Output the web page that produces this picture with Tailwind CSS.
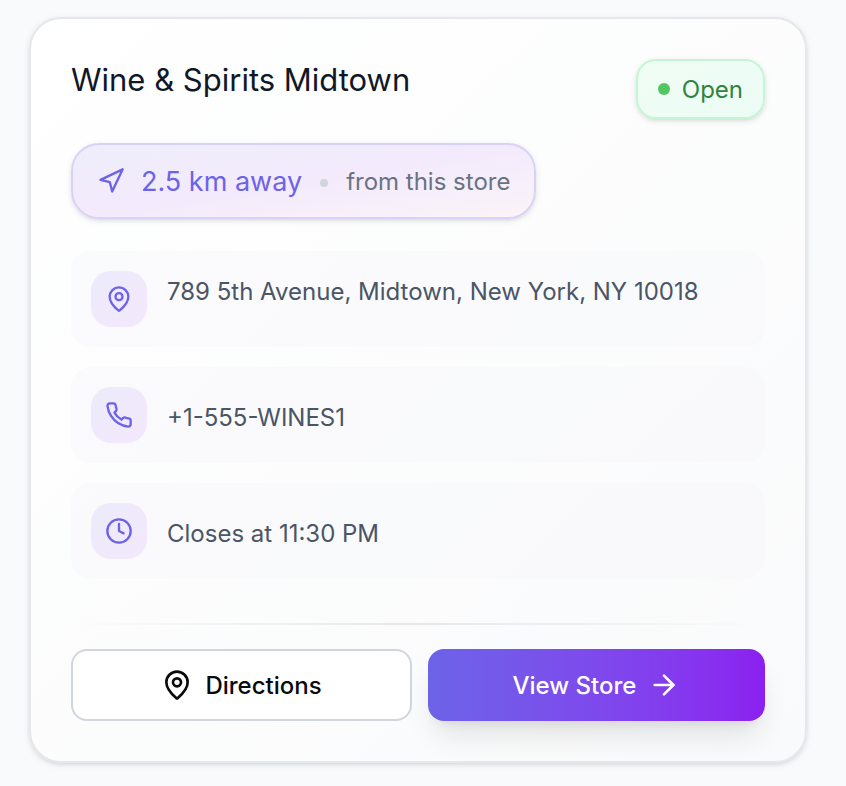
<!DOCTYPE html>
<html lang="en">
<head>
<meta charset="utf-8">
<meta name="viewport" content="width=device-width, initial-scale=1">
<title>Wine &amp; Spirits Midtown</title>
<script src="https://cdn.jsdelivr.net/npm/@tailwindcss/browser@4"></script>
</head>
<body class="min-h-screen bg-[#f9fafc] pt-[17px] pr-[39px] pb-[23px] pl-[29px] font-[Inter,'Liberation_Sans',sans-serif] text-[24px] leading-8">
<article class="rounded-[32px] border-2 border-[#e5e7eb] bg-linear-to-br from-white to-[#f9fafb] bg-clip-padding p-10 shadow-[0_2px_6px_rgb(0_0_0/0.1),0_2px_4px_-2px_rgb(0_0_0/0.1)]">
  <header class="mb-6 flex items-start justify-between gap-4">
    <h1 class="text-[31px] leading-[42px] text-[#101828]">Wine &amp; Spirits Midtown</h1>
    <span class="flex h-[60px] items-center gap-3 rounded-[20px] border-2 border-[#c3f6d2] bg-linear-to-br from-[#f0fdf4] to-[#ecfdf5] px-5 text-[#2f843f] shadow-[0_2px_6px_rgb(0_0_0/0.1),0_2px_4px_-2px_rgb(0_0_0/0.1)]">
      <span class="size-3 rounded-full bg-[#51c763]"></span><span class="pt-[2px]">Open</span>
    </span>
  </header>
  <p class="mb-8 flex h-[76px] w-fit items-center rounded-[28px] border-2 border-[#d9d2f8] bg-linear-to-br from-[#eeeefc] via-[#f3eafc] to-[#fbf4f8] px-6 shadow-[0_2px_6px_rgb(0_0_0/0.1),0_2px_4px_-2px_rgb(0_0_0/0.1)]">
    <svg class="size-7 shrink-0 text-[#6c63e8]" viewBox="0 0 24 24" fill="none" stroke="currentColor" stroke-width="2" stroke-linecap="round" stroke-linejoin="round" aria-hidden="true"><polygon points="3 11 22 2 13 21 11 13 3 11"/></svg>
    <span class="ml-4 pt-[2px] text-[27px] leading-10 text-[#6c63e8]">2.5 km away</span>
    <span class="mx-[18px] mt-1 size-2 rounded-full bg-[#d1d5dc]"></span>
    <span class="pt-[2px] text-[#6a7282]">from this store</span>
  </p>
  <ul class="flex flex-col gap-5 text-[#4a5565]">
    <li class="flex items-start gap-5 rounded-[20px] bg-[#f9f9fb]/60 p-5">
      <span class="flex size-14 shrink-0 items-center justify-center rounded-[20px] bg-linear-to-br from-[#ecebfb] to-[#f3e8fc] text-[#6c63e8]">
        <svg class="size-7" viewBox="0 0 24 24" fill="none" stroke="currentColor" stroke-width="2" stroke-linecap="round" stroke-linejoin="round" aria-hidden="true"><path d="M20 10c0 4.993-5.539 10.193-7.399 11.799a1 1 0 0 1-1.202 0C9.539 20.193 4 14.993 4 10a8 8 0 0 1 16 0"/><circle cx="12" cy="10" r="3"/></svg>
      </span>
      <span class="leading-[42px]">789 5th Avenue, Midtown, New York, NY 10018</span>
    </li>
    <li class="flex items-center gap-5 rounded-[20px] bg-[#f9f9fb]/60 p-5">
      <span class="flex size-14 shrink-0 items-center justify-center rounded-[20px] bg-linear-to-br from-[#ecebfb] to-[#f3e8fc] text-[#6c63e8]">
        <svg class="size-7" viewBox="0 0 24 24" fill="none" stroke="currentColor" stroke-width="2" stroke-linecap="round" stroke-linejoin="round" aria-hidden="true"><path d="M22 16.92v3a2 2 0 0 1-2.18 2 19.79 19.79 0 0 1-8.63-3.07 19.5 19.5 0 0 1-6-6 19.79 19.79 0 0 1-3.07-8.67A2 2 0 0 1 4.11 2h3a2 2 0 0 1 2 1.72 12.84 12.84 0 0 0 .7 2.81 2 2 0 0 1-.45 2.11L8.09 9.91a16 16 0 0 0 6 6l1.27-1.27a2 2 0 0 1 2.11-.45 12.84 12.84 0 0 0 2.81.7A2 2 0 0 1 22 16.92z"/></svg>
      </span>
      <a href="tel:+1-555-WINES1" class="pt-[6px]">+1-555-WINES1</a>
    </li>
    <li class="flex items-center gap-5 rounded-[20px] bg-[#f9f9fb]/60 p-5">
      <span class="flex size-14 shrink-0 items-center justify-center rounded-[20px] bg-linear-to-br from-[#ecebfb] to-[#f3e8fc] text-[#6c63e8]">
        <svg class="size-7" viewBox="0 0 24 24" fill="none" stroke="currentColor" stroke-width="2" stroke-linecap="round" stroke-linejoin="round" aria-hidden="true"><circle cx="12" cy="12" r="10"/><polyline points="12 6 12 12 16 14"/></svg>
      </span>
      <span class="pt-[6px]">Closes at 11:30 PM</span>
    </li>
  </ul>
  <div class="mt-11 mb-6 h-[2px] bg-linear-to-r from-transparent via-[#e5e7eb] to-transparent"></div>
  <div class="flex gap-4 font-medium">
    <button type="button" class="flex h-[72px] flex-1 items-center justify-center gap-3 rounded-2xl border-2 border-[#d1d5dc] bg-white text-[#0a0a0a]">
      <svg class="size-8" viewBox="0 0 24 24" fill="none" stroke="currentColor" stroke-width="2" stroke-linecap="round" stroke-linejoin="round" aria-hidden="true"><path d="M20 10c0 4.993-5.539 10.193-7.399 11.799a1 1 0 0 1-1.202 0C9.539 20.193 4 14.993 4 10a8 8 0 0 1 16 0"/><circle cx="12" cy="10" r="3"/></svg>
      <span class="pt-[2px]">Directions</span>
    </button>
    <button type="button" class="flex h-[72px] flex-1 items-center justify-center gap-3 rounded-2xl bg-linear-to-r from-[#6c63e8] to-[#8b1ff0] text-white shadow-[0_20px_30px_-6px_rgb(0_0_0/0.1),0_8px_12px_-8px_rgb(0_0_0/0.1)]">
      <span class="pt-[2px]">View Store</span>
      <svg class="size-8" viewBox="0 0 24 24" fill="none" stroke="currentColor" stroke-width="2" stroke-linecap="round" stroke-linejoin="round" aria-hidden="true"><path d="M5 12h14"/><path d="m12 5 7 7-7 7"/></svg>
    </button>
  </div>
</article>
</body>
</html>
